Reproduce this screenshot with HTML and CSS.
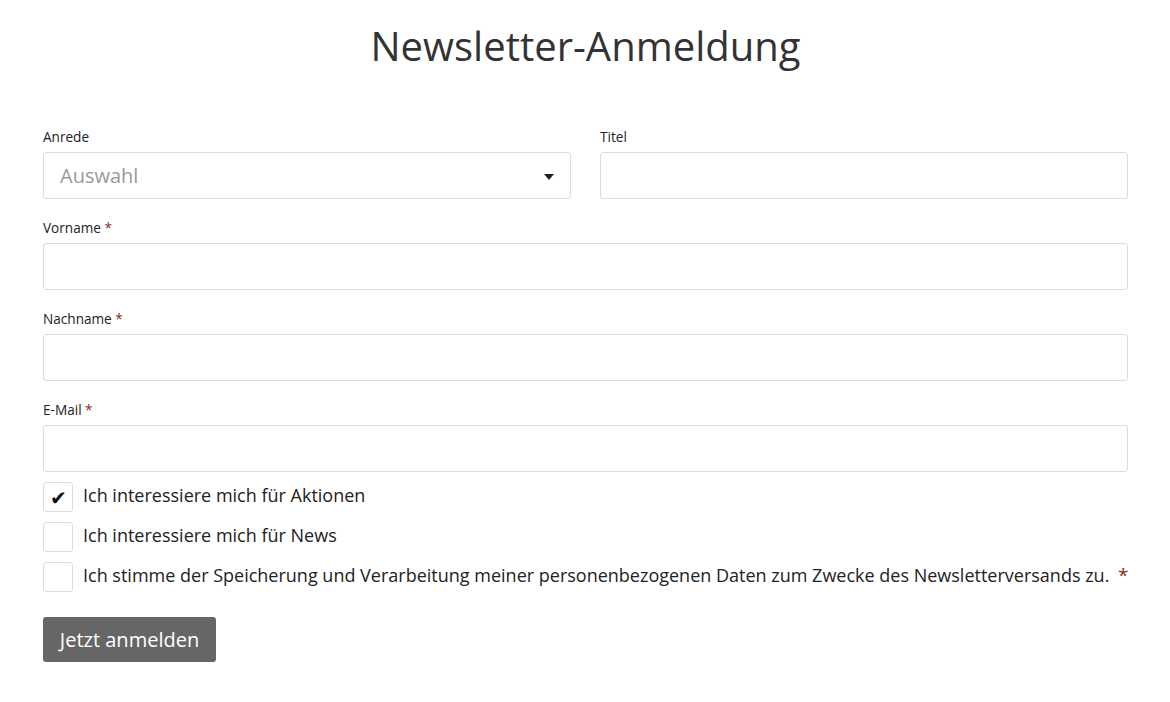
FILE: index.html
```html
<!DOCTYPE html>
<html lang="de">
<head>
<meta charset="utf-8">
<title>Newsletter-Anmeldung</title>
<link rel="stylesheet" href="styles.css">
</head>
<body>
<main class="page">
  <h1 class="title">Newsletter-Anmeldung</h1>
  <form class="form">
    <div class="row two">
      <div class="field">
        <label class="label">Anrede</label>
        <div class="select">
          <span class="placeholder">Auswahl</span>
          <span class="caret"></span>
        </div>
      </div>
      <div class="field">
        <label class="label">Titel</label>
        <div class="input"></div>
      </div>
    </div>
    <div class="field">
      <label class="label">Vorname <span class="req">*</span></label>
      <div class="input"></div>
    </div>
    <div class="field">
      <label class="label">Nachname <span class="req">*</span></label>
      <div class="input"></div>
    </div>
    <div class="field">
      <label class="label">E-Mail <span class="req">*</span></label>
      <div class="input"></div>
    </div>
    <div class="checks">
      <div class="check"><span class="box">✔</span><span class="ctext">Ich interessiere mich für Aktionen</span></div>
      <div class="check"><span class="box"></span><span class="ctext">Ich interessiere mich für News</span></div>
      <div class="check"><span class="box"></span><span class="ctext">Ich stimme der Speicherung und Verarbeitung meiner personenbezogenen Daten zum Zwecke des Newsletterversands zu. <span class="req big">*</span></span></div>
    </div>
    <button type="button" class="btn">Jetzt anmelden</button>
  </form>
</main>
</body>
</html>
```

FILE: styles.css
```css
* { box-sizing: border-box; }
html, body { margin: 0; padding: 0; background: #fff; }
body { font-family: "Open Sans", "Liberation Sans", sans-serif; color: #222; }
.page { padding: 0 42px 0 43px; }
.title {
  margin: 0;
  padding-top: 19px;
  text-align: center;
  font-size: 40px;
  font-weight: 400;
  line-height: 54px;
  color: #333;
}
.form { margin-top: 55px; display: flex; flex-direction: column; }
.row.two { display: grid; grid-template-columns: 528px 528px; column-gap: 29px; }
.field { display: flex; flex-direction: column; margin-bottom: 20px; }
.label { font-size: 13.6px; line-height: 18px; margin-bottom: 6px; color: #222; }
.req { color: #8a2a1c; }
.input, .select {
  height: 47px;
  border: 1px solid #dcdcdc;
  border-radius: 3px;
  background: #fff;
}
.select { display: flex; align-items: center; justify-content: space-between; padding: 0 16px 0 16px; }
.placeholder { font-size: 20px; color: #999; }
.caret {
  width: 0; height: 0;
  border-left: 5px solid transparent;
  border-right: 5px solid transparent;
  border-top: 6px solid #222;
  margin-top: 2px;
}
.checks { display: flex; flex-direction: column; gap: 10px; margin-top: -10px; }
.check { display: flex; align-items: center; gap: 10px; }
.box {
  width: 30px; height: 30px; flex: none;
  border: 1px solid #dcdcdc; border-radius: 3px;
  display: flex; align-items: center; justify-content: center;
  font-size: 20px; color: #111;
}
.ctext { font-size: 18px; line-height: 24px; color: #222; white-space: nowrap; padding-bottom: 4px; }
.req.big { margin-left: 4px; font-size: 19px; }
.btn {
  align-self: flex-start;
  margin-top: 25px;
  height: 45px;
  width: 173px;
  background: #666;
  color: #fff;
  border: none;
  border-radius: 3px;
  font-family: "Open Sans", "Liberation Sans", sans-serif;
  font-size: 20px;
  padding: 0;
}
```
